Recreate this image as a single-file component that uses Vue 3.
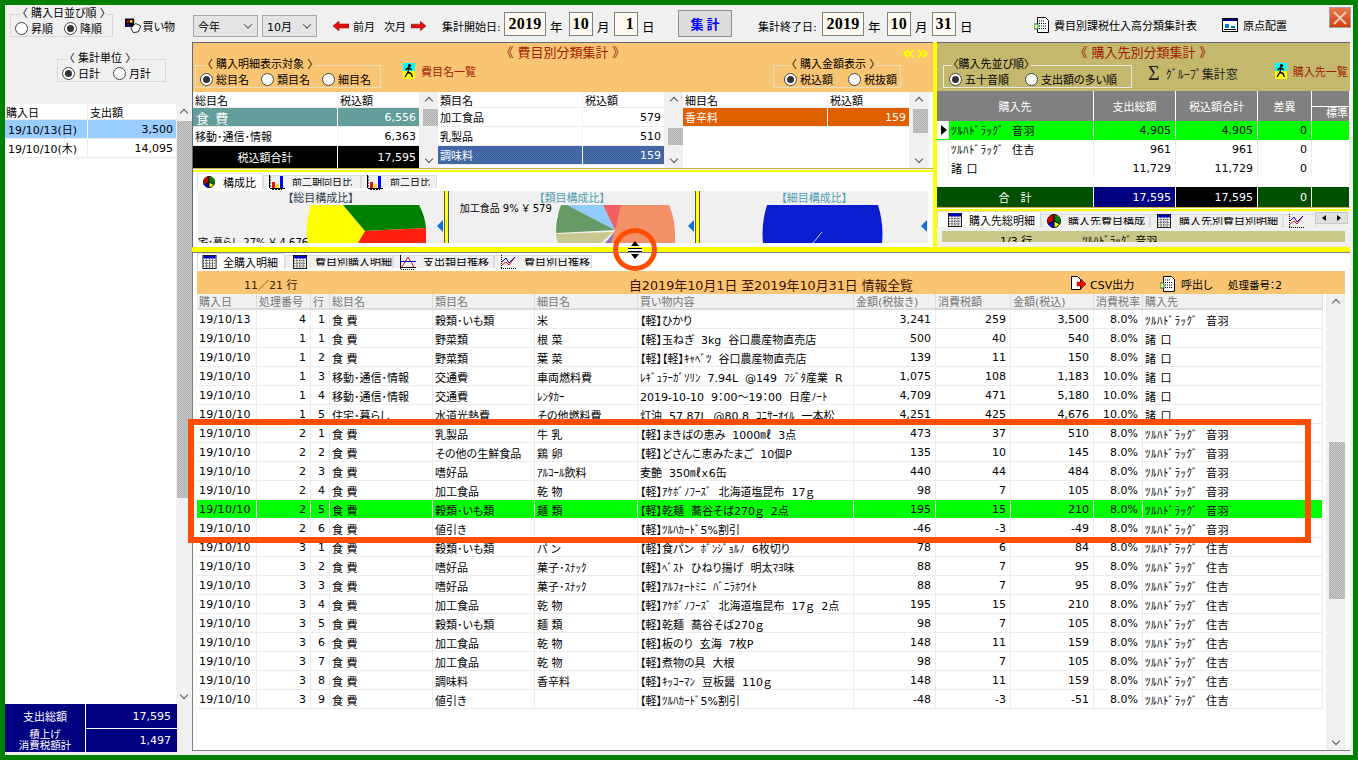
<script setup>
const S1 = 'ﾂﾙﾊﾄﾞﾗｯｸﾞ  音羽'
const S2 = 'ﾂﾙﾊﾄﾞﾗｯｸﾞ  住吉'
const S3 = '諸 口'
const F = '食 費'
const headers = ['購入日', '処理番号', '行', '総目名', '類目名', '細目名', '買い物内容', '金額(税抜き)', '消費税額', '金額(税込)', '消費税率', '購入先']
const rows = [
  ['19/10/13', 4, 1, F, '穀類･いも類', '米', '【軽】ひかり', '3,241', '259', '3,500', '8.0%', S1],
  ['19/10/10', 1, 1, F, '野菜類', '根 菜', '【軽】玉ねぎ  3kg  谷口農産物直売店', '500', '40', '540', '8.0%', S3],
  ['19/10/10', 1, 2, F, '野菜類', '葉 菜', '【軽】【軽】ｷｬﾍﾞﾂ  谷口農産物直売店', '139', '11', '150', '8.0%', S3],
  ['19/10/10', 1, 3, '移動･通信･情報', '交通費', '車両燃料費', 'ﾚｷﾞｭﾗｰｶﾞｿﾘﾝ  7.94L  @149  ﾌｼﾞﾀ産業  R', '1,075', '108', '1,183', '10.0%', S3],
  ['19/10/10', 1, 4, '移動･通信･情報', '交通費', 'ﾚﾝﾀｶｰ', '2019-10-10  9：00～19：00  日産ﾉｰﾄ', '4,709', '471', '5,180', '10.0%', S3],
  ['19/10/10', 1, 5, '住宅･暮らし', '水道光熱費', 'その他燃料費', '灯油  57.87L  @80.8  ｺﾆｻｰｵｲﾙ  一本松', '4,251', '425', '4,676', '10.0%', S3],
  ['19/10/10', 2, 1, F, '乳製品', '牛 乳', '【軽】まきばの恵み  1000㎖  3点', '473', '37', '510', '8.0%', S1],
  ['19/10/10', 2, 2, F, 'その他の生鮮食品', '鶏 卵', '【軽】どさんこ恵みたまご  10個P', '135', '10', '145', '8.0%', S1],
  ['19/10/10', 2, 3, F, '嗜好品', 'ｱﾙｺｰﾙ飲料', '麦艶  350㎖ｘ6缶', '440', '44', '484', '8.0%', S1],
  ['19/10/10', 2, 4, F, '加工食品', '乾 物', '【軽】ｱｹﾎﾞﾉﾌｰｽﾞ  北海道塩昆布  17ｇ', '98', '7', '105', '8.0%', S1],
  ['19/10/10', 2, 5, F, '穀類･いも類', '麺 類', '【軽】乾麺  蕎谷そば270ｇ  2点', '195', '15', '210', '8.0%', S1],
  ['19/10/10', 2, 6, F, '値引き', '', '【軽】ﾂﾙﾊｶｰﾄﾞ5%割引', '-46', '-3', '-49', '8.0%', S1],
  ['19/10/10', 3, 1, F, '穀類･いも類', 'パ ン', '【軽】食パン  ﾎﾞﾝｼﾞｮﾙﾉ  6枚切り', '78', '6', '84', '8.0%', S2],
  ['19/10/10', 3, 2, F, '嗜好品', '菓子･ｽﾅｯｸ', '【軽】ﾍﾞｽﾄ  ひねり揚げ  明太ﾏﾖ味', '88', '7', '95', '8.0%', S2],
  ['19/10/10', 3, 3, F, '嗜好品', '菓子･ｽﾅｯｸ', '【軽】ｱﾙﾌｫｰﾄﾐﾆ  ﾊﾞﾆﾗﾎﾜｲﾄ', '88', '7', '95', '8.0%', S2],
  ['19/10/10', 3, 4, F, '加工食品', '乾 物', '【軽】ｱｹﾎﾞﾉﾌｰｽﾞ  北海道塩昆布  17ｇ  2点', '195', '15', '210', '8.0%', S2],
  ['19/10/10', 3, 5, F, '穀類･いも類', '麺 類', '【軽】乾麺  蕎谷そば270ｇ', '98', '7', '105', '8.0%', S2],
  ['19/10/10', 3, 6, F, '加工食品', '乾 物', '【軽】板のり  玄海  7枚P', '148', '11', '159', '8.0%', S2],
  ['19/10/10', 3, 7, F, '加工食品', '乾 物', '【軽】煮物の具  大根', '98', '7', '105', '8.0%', S2],
  ['19/10/10', 3, 8, F, '調味料', '香辛料', '【軽】ｷｯｺｰﾏﾝ  豆板醤  110ｇ', '148', '11', '159', '8.0%', S2],
  ['19/10/10', 3, 9, F, '値引き', '', '【軽】ﾂﾙﾊｶｰﾄﾞ5%割引', '-48', '-3', '-51', '8.0%', S2],
]
const numCols = [1, 2, 7, 8, 9, 10]
const suppliers = [
  { name: S1, a: '4,905', b: '4,905', c: '0', cur: true },
  { name: S2, a: '961', b: '961', c: '0' },
  { name: S3, a: '11,729', b: '11,729', c: '0' },
]
const cat2 = [['加工食品', '579', ''], ['乳製品', '510', ''], ['調味料', '159', 'sel-blue']]
</script>

<template>
  <div class="app">
    <svg class="defs" width="0" height="0">
      <defs>
        <symbol id="grid" viewBox="0 0 16 16">
          <rect x="0.5" y="0.5" width="15" height="15" fill="#fff" stroke="#000" />
          <rect x="1" y="1" width="14" height="3" fill="#0000c0" />
          <path d="M1 6.5h14M1 9.5h14M1 12.5h14M4.5 4v11M8 4v11M11.5 4v11" stroke="#000" stroke-dasharray="1 1" />
        </symbol>
        <symbol id="pie" viewBox="0 0 14 14">
          <circle cx="7" cy="7" r="6.5" fill="#ffff00" stroke="#000" />
          <path d="M7 7V.5A6.5 6.5 0 0 0 1.3 10z" fill="#c00000" />
          <path d="M7 7V.5A6.5 6.5 0 0 1 12.7 10z" fill="#008000" />
          <path d="M7 7L1.3 10A6.5 6.5 0 0 0 7 13.5z" fill="#0000e0" />
          <path d="M7 .5V7M7 7l5.7 3M7 7l-5.7 3M7 7v6.5" stroke="#000" />
        </symbol>
        <symbol id="bars" viewBox="0 0 16 16">
          <path d="M.5 1v13M0 3h2M0 6h2M0 9h2M0 12h2" stroke="#000" />
          <rect x="3" y="8" width="3" height="6" fill="#e01010" />
          <rect x="7" y="10" width="3" height="4" fill="#ffe000" />
          <rect x="11" y="2" width="3" height="12" fill="#0000ff" />
          <path d="M1 14.5h15" stroke="#000" />
          <path d="M3 15.5h10" stroke="#000" stroke-dasharray="2 1" />
        </symbol>
        <symbol id="line" viewBox="0 0 16 16">
          <path d="M.5 1v14M0 13.5h16" stroke="#000" />
          <path d="M2 13L8 3l6 10" fill="none" stroke="#e01010" />
          <path d="M0 7.5h16" stroke="#0000c0" />
          <path d="M1 15.5h14" stroke="#000" stroke-dasharray="1 1" />
        </symbol>
        <symbol id="wave" viewBox="0 0 16 16">
          <path d="M.5 1v14M0 14.5h16" stroke="#000" stroke-dasharray="1 1" />
          <path d="M1 11l4-3 3 3 6-8" fill="none" stroke="#e01010" />
          <path d="M1 8l4-4 3 5 6-6" fill="none" stroke="#0000e0" />
        </symbol>
        <symbol id="walker" viewBox="0 0 12 16">
          <rect width="12" height="8" fill="#00ffff" />
          <rect y="8" width="12" height="8" fill="#ffff00" />
          <circle cx="6.5" cy="2.5" r="1.6" fill="#000" />
          <path d="M6 4.5L5 9 2 14M5 9l3 1.5 1.5 3.5M2.500 7l3-2.500 3.500 2.500" fill="none" stroke="#000" stroke-width="1.400" />
        </symbol>
        <symbol id="doc" viewBox="0 0 16 16">
          <path d="M3.500.5h8l3 3v12h-11z" fill="#fff" stroke="#000" />
          <path d="M5 4h6M5 6.500h7M5 9h7M5 11.500h7" stroke="#000" stroke-dasharray="1 1" />
          <rect x="0" y="7" width="4" height="5" fill="#ffff60" stroke="#008080" />
        </symbol>
      </defs>
    </svg>

    <header class="toolbar">
      <fieldset class="grp grp-order">
        <legend>〈 購入日並び順 〉</legend>
        <span class="radio"><i class="dot"></i>昇順</span>
        <span class="radio"><i class="dot on"></i>降順</span>
      </fieldset>
      <span class="tool t-shop">
        <svg width="20" height="18" viewBox="0 0 20 18">
          <rect x="0" y="0" width="11" height="10" fill="#000" />
          <rect x="2" y="2" width="3" height="3" fill="#e01010" />
          <rect x="6" y="2" width="3" height="3" fill="#ffe000" />
          <rect x="2" y="6" width="3" height="3" fill="#0000e0" />
          <path d="M7 11l6-5 6 3-3 7-6 1z" fill="#fff" stroke="#000" />
        </svg>買い物
      </span>
      <span class="select s-year">今年<i class="chev"></i></span>
      <span class="select s-month">10月<i class="chev"></i></span>
      <span class="tool t-prev">
        <svg width="16" height="10" viewBox="0 0 16 10"><path d="M0 5l6-5v3h10v4H6v3z" fill="#e01010" stroke="#800" stroke-width=".5" /></svg>前月
      </span>
      <span class="tool t-next">次月
        <svg width="16" height="10" viewBox="0 0 16 10"><path d="M16 5l-6-5v3H0v4h10v3z" fill="#e01010" stroke="#800" stroke-width=".5" /></svg>
      </span>
      <span class="lbl l-start">集計開始日:</span>
      <span class="date w-y">2019</span><span class="unit">年</span>
      <span class="date w-d">10</span><span class="unit">月</span>
      <span class="date w-d">1</span><span class="unit">日</span>
      <button class="run">集 計</button>
      <span class="lbl l-end">集計終了日:</span>
      <span class="date w-y">2019</span><span class="unit">年</span>
      <span class="date w-d">10</span><span class="unit">月</span>
      <span class="date w-d">31</span><span class="unit">日</span>
      <span class="tool t-report"><svg width="16" height="16"><use href="#doc" /></svg>費目別課税仕入高分類集計表</span>
      <span class="tool t-origin"><svg width="16" height="14" viewBox="0 0 16 14"><rect x=".5" y=".5" width="15" height="13" fill="#fff" stroke="#000" /><rect x="1" y="1" width="14" height="2" fill="#000080" /><path d="M3 6h4v4H3zM9 8h4v2H9z" fill="#0080c0" /><path d="M2 11.500h12" stroke="#000" /></svg>原点配置</span>
      <span class="close"><svg width="14" height="14" viewBox="0 0 14 14"><path d="M1 1l12 12M13 1L1 13" stroke="#f0c8b8" stroke-width="2" /></svg></span>
    </header>

    <div class="body">
      <aside class="left">
        <div class="left-top">
          <fieldset class="grp grp-unit">
            <legend>〈 集計単位 〉</legend>
            <span class="radio"><i class="dot on"></i>日計</span>
            <span class="radio"><i class="dot"></i>月計</span>
          </fieldset>
        </div>
        <div class="left-grid">
          <div class="left-table">
            <div class="lrow lhead"><span>購入日</span><span>支出額</span></div>
            <div class="lrow lsel"><span>19/10/13(日)</span><span class="num">3,500</span></div>
            <div class="lrow"><span>19/10/10(木)</span><span class="num">14,095</span></div>
          </div>
          <div class="sb sb-left"><i class="up"></i><b class="thumb"></b><i class="down"></i></div>
        </div>
        <div class="left-sum">
          <div class="sum-row"><span class="sum-l">支出総額</span><span class="num">17,595</span></div>
          <div class="sum-row"><span class="sum-l small">積上げ<br />消費税額計</span><span class="num">1,497</span></div>
        </div>
      </aside>

      <main class="right">
        <div class="top-panels">
          <section class="cat-panel">
            <div class="panel-head">
              <div class="ptitle">《 費目別分類集計 》</div>
              <div class="arrows">«»</div>
              <div class="head-row">
                <fieldset class="grp grp-target">
                  <legend>〈 購入明細表示対象 〉</legend>
                  <span class="radio"><i class="dot on"></i>総目名</span>
                  <span class="radio"><i class="dot"></i>類目名</span>
                  <span class="radio"><i class="dot"></i>細目名</span>
                </fieldset>
                <span class="link l-cat"><svg width="12" height="16"><use href="#walker" /></svg>費目名一覧</span>
                <fieldset class="grp grp-amount">
                  <legend>〈 購入金額表示 〉</legend>
                  <span class="radio"><i class="dot on"></i>税込額</span>
                  <span class="radio"><i class="dot"></i>税抜額</span>
                </fieldset>
              </div>
            </div>
            <div class="cat-tables">
              <div class="ct ct1">
                <div class="crow chead"><span>総目名</span><span>税込額</span></div>
                <div class="crow sel-teal"><span class="sp">食 費</span><span class="num">6,556</span></div>
                <div class="crow"><span>移動･通信･情報</span><span class="num">6,363</span></div>
                <div class="crow ctotal"><span class="center">税込額合計</span><span class="num">17,595</span></div>
              </div>
              <div class="sb sb-a"><i class="up"></i><b class="thumb"></b><i class="down"></i></div>
              <div class="ct ct2">
                <div class="crow chead"><span>類目名</span><span>税込額</span></div>
                <div v-for="c in cat2" :key="c[0]" class="crow" :class="c[2]"><span>{{ c[0] }}</span><span class="num">{{ c[1] }}</span></div>
              </div>
              <div class="sb sb-b"><i class="up"></i><b class="thumb"></b><i class="down"></i></div>
              <div class="ct ct3">
                <div class="crow chead"><span>細目名</span><span>税込額</span></div>
                <div class="crow sel-orange"><span>香辛料</span><span class="num">159</span></div>
              </div>
              <div class="sb sb-c"><i class="up"></i><b class="thumb"></b><i class="down"></i></div>
            </div>
            <div class="dbl"></div>
            <div class="tabs tabs-chart">
              <span class="tab active"><svg width="14" height="14"><use href="#pie" /></svg>構成比</span>
              <span class="tab w98"><svg width="16" height="16"><use href="#bars" /></svg><em class="tx">前二期同日比</em></span>
              <span class="tab w76"><svg width="16" height="16"><use href="#bars" /></svg><em class="tx">前二日比</em></span>
            </div>
            <div class="charts">
              <div class="chart c1">
                <span class="ctitle dark">【総目構成比】</span>
                <svg class="pie" width="246" height="52" viewBox="197 191 246 52">
                  <path d="M342 205L364 231L357 243H306Q304 224 310 205Z" fill="#ffff00" />
                  <path d="M342 205H418Q424 216 425 228L364 231Z" fill="#008000" />
                  <path d="M364 231L425 228V243H357Z" fill="#ff2010" />
                </svg>
                <span class="clabel l1">住宅･暮らし 27% ￥ 4,676</span>
                <i class="tri"></i>
              </div>
              <div class="vdiv"></div>
              <div class="chart c2">
                <span class="ctitle teal">【類目構成比】</span>
                <svg class="pie" width="247" height="52" viewBox="448 191 247 52">
                  <path d="M600 205L614 230L606 243H674Q675 220 668 205H620Z" fill="#f49068" />
                  <path d="M602 205H620L614 230Z" fill="#f06060" />
                  <path d="M566 205H602L614 230Z" fill="#90ccff" />
                  <path d="M560 205H566L614 230L555 233Q555 218 560 205Z" fill="#669966" />
                  <path d="M555 234L612 232L600 243H557Q555 238 555 234Z" fill="#c8c890" />
                  <path d="M613 233L604 243H610Z" fill="#8870c0" />
                  <path d="M547 215L557 217" stroke="#fff" />
                </svg>
                <span class="clabel l2">加工食品 9% ￥ 579</span>
                <i class="tri"></i>
              </div>
              <div class="vdiv"></div>
              <div class="chart c3">
                <span class="ctitle teal">【細目構成比】</span>
                <svg class="pie" width="228" height="52" viewBox="700 191 228 52">
                  <path d="M767 205H878Q884 224 882 243H763Q761 224 767 205Z" fill="#0a1ed0" />
                  <path d="M813 243L822 232" stroke="#c0c8f0" />
                </svg>
                <i class="tri"></i>
              </div>
            </div>
          </section>

          <section class="sup-panel">
            <div class="sup-head">
              <div class="ptitle">《 購入先別分類集計 》</div>
              <div class="sup-tools">
                <fieldset class="grp grp-sup">
                  <legend>〈購入先並び順〉</legend>
                  <span class="radio"><i class="dot on"></i>五十音順</span>
                  <span class="radio"><i class="dot"></i>支出額の多い順</span>
                </fieldset>
                <span class="sigma"><b>Σ</b>ｸﾞﾙｰﾌﾟ集計窓</span>
                <span class="link l-sup"><svg width="12" height="16"><use href="#walker" /></svg>購入先一覧</span>
              </div>
            </div>
            <div class="sup-table">
              <div class="srow shead">
                <span class="s-name c">購入先</span><span class="c">支出総額</span><span class="c">税込額合計</span><span class="c">差異</span>
                <span class="s-extra"><em>標準</em></span>
              </div>
              <div v-for="s in suppliers" :key="s.name" class="srow" :class="{ cur: s.cur }">
                <span class="s-name"><i class="ind"><b v-if="s.cur"></b></i><span class="s-text">{{ s.name }}</span></span>
                <span class="num">{{ s.a }}</span><span class="num">{{ s.b }}</span><span class="num">{{ s.c }}</span><span></span>
              </div>
              <div class="sgap"></div>
              <div class="srow stotal">
                <span class="c s-name wide">合　計</span><span class="num navy">17,595</span><span class="num black">17,595</span><span class="num">0</span><span></span>
              </div>
            </div>
            <div class="dbl"></div>
            <div class="tabs tabs-sup">
              <span class="tab active"><svg width="16" height="14"><use href="#grid" /></svg>購入先総明細</span>
              <span class="tab w109"><svg width="14" height="14"><use href="#pie" /></svg><em class="tx">購入先費目構成</em></span>
              <span class="tab w133"><svg width="16" height="14"><use href="#grid" /></svg><em class="tx">購入先別費目別明細</em></span>
              <span class="tab w32"><svg width="16" height="16"><use href="#wave" /></svg></span>
              <span class="spin"><i class="tl"></i><i class="tr"></i></span>
            </div>
            <div class="sup-band"><span>1/3 行</span><span>ﾂﾙﾊﾄﾞﾗｯｸﾞ 音羽</span></div>
          </section>
        </div>

        <div class="splitter"></div>

        <section class="detail">
          <div class="tabs tabs-detail">
            <span class="tab active"><svg width="16" height="14"><use href="#grid" /></svg>全購入明細</span>
            <span class="tab w108"><svg width="16" height="14"><use href="#grid" /></svg><em class="tx">費目別購入明細</em></span>
            <span class="tab w101"><svg width="16" height="16"><use href="#line" /></svg><em class="tx">支出類目推移</em></span>
            <span class="tab w98"><svg width="16" height="16"><use href="#wave" /></svg><em class="tx">費目別日推移</em></span>
          </div>
          <div class="band">
            <span class="b-count">11／21 行</span>
            <span class="b-title">自2019年10月1日 至2019年10月31日 情報全覧</span>
            <span class="b-csv">
              <svg width="16" height="16" viewBox="0 0 16 16"><path d="M1.500.5h6l3 3v10h-9z" fill="#fff" stroke="#000" /><path d="M7 6h4V3l5 5-5 5v-3H7z" fill="#e01010" stroke="#800" stroke-width=".5" /></svg>CSV出力
            </span>
            <span class="b-call"><svg width="16" height="16"><use href="#doc" /></svg>呼出し</span>
            <span class="b-no">処理番号：2</span>
          </div>
          <div class="grid-wrap">
            <div class="dgrid">
              <div class="drow dhead">
                <span v-for="h in headers" :key="h">{{ h }}</span>
              </div>
              <div v-for="(r, i) in rows" :key="i" class="drow" :class="{ hit: i === 10 }">
                <span v-for="(v, j) in r" :key="j" :class="{ num: numCols.includes(j) }">{{ v }}</span>
              </div>
            </div>
            <div class="sb sb-d"><i class="up"></i><b class="gap1"></b><b class="thumb"></b><i class="down"></i></div>
          </div>
        </section>
      </main>
    </div>

    <div class="mark-rect"></div>
    <div class="mark-ring"><svg width="16" height="18" viewBox="0 0 16 18"><path d="M1 7h14v4H1z" fill="#fff" /><path d="M8 0l4 5H4zM8 18l-4-5h8z" fill="#000" /><path d="M1 7.500h14M1 10.500h14" stroke="#000" /></svg></div>
  </div>
</template>

<style scoped>
* { box-sizing: border-box; }
.defs { position: absolute; }
.app {
  width: 1358px; height: 760px; position: relative; overflow: hidden;
  border: 5px solid #008000; background: #f0f0f0;
  display: flex; flex-direction: column;
  font: 11px "DejaVu Sans", "Noto Sans CJK JP", sans-serif; color: #000;
  font-feature-settings: "palt";
}
.num { text-align: right; }
.c { text-align: center; }

/* toolbar */
.toolbar { height: 37px; display: flex; align-items: center; flex: none; position: relative; }
.grp { margin: 0; padding: 0 3px; min-width: 0; border: 1px solid #d8d8d8; display: flex; align-items: center; position: relative; }
.grp legend { padding: 0 1px; font-size: 11px; line-height: 12px; margin-left: 6px; color: #000; white-space: nowrap; }
.radio { display: inline-flex; align-items: center; gap: 3px; white-space: nowrap; }
.dot { width: 13px; height: 13px; border-radius: 50%; background: #fff; border: 1px solid #444; display: inline-block; position: relative; flex: none; }
.dot.on::after { content: ""; position: absolute; inset: 2px; border-radius: 50%; background: #333; }
.grp-order { width: 103px; height: 29px; margin: 3px 0 0 5px; gap: 11px; padding-left: 4px; align-self: flex-start; flex: none; }
.tool { display: inline-flex; align-items: center; gap: 3px; white-space: nowrap; flex: none; margin-top: 5px; }
.t-shop { margin-left: 12px; width: 50px; gap: 1px; overflow: hidden; }
.select { height: 22px; border: 1px solid #a8a8a8; background: #e4e4e4; display: flex; align-items: center; justify-content: space-between; padding: 0 6px 0 4px; flex: none; margin-top: 5px; }
.chev { width: 6px; height: 6px; border: solid #555; border-width: 0 1.300px 1.300px 0; transform: rotate(45deg) translate(-1px, -1px); }
.s-year { width: 65px; margin-left: 18px; }
.s-month { width: 55px; margin-left: 4px; }
.t-prev { margin-left: 16px; width: 42px; gap: 4px; }
.t-next { margin-left: 9px; width: 42px; gap: 5px; }
.lbl { white-space: nowrap; flex: none; margin-top: 5px; }
.l-start { margin-left: 16px; width: 62px; }
.date { height: 24px; border: 1px solid #808080; background: #fffaf0; font: bold 16px "Liberation Serif", serif; letter-spacing: .3px; display: flex; align-items: center; justify-content: flex-end; padding: 0 3px; margin-right: 4px; flex: none; }
.w-y { width: 42px; justify-content: center; }
.w-d { width: 24px; }
.unit { width: 17px; font-size: 12.500px; flex: none; margin-top: 5px; }
.w-y + .unit { width: 19px; }
.run { width: 54px; height: 27px; margin-left: 19px; border: 1px solid #909090; background: #dcdcdc; color: #0000ff; font: bold 13px "Noto Sans CJK JP", sans-serif; padding: 0; flex: none; }
.l-end { margin-left: 26px; width: 64px; }
.t-report { margin-left: 57px; gap: 4px; margin-top: 3px; }
.t-origin { margin-left: 25px; gap: 5px; margin-top: 3px; }
.close { position: absolute; left: 1324px; top: 2px; width: 22px; height: 21px; background: linear-gradient(#e87850, #d04010); border: 1px solid #a0a0a0; display: flex; align-items: center; justify-content: center; }

/* body */
.body { flex: 1; display: flex; min-height: 0; }
.left { width: 187px; flex: none; display: flex; flex-direction: column; }
.left-top { height: 62px; padding: 11px 0 0 52px; }
.grp-unit { width: 109px; height: 29px; gap: 13px; padding-left: 4px; }
.left-grid { flex: 1; display: flex; min-height: 0; }
.left-table { width: 171px; background: #fff; }
.lrow { display: grid; grid-template-columns: 82px 89px; height: 19px; border-bottom: 1px solid #ececec; align-items: center; }
.lrow span { padding: 0 3px; white-space: nowrap; }
.lrow span + span { border-left: 1px solid #ececec; height: 100%; display: flex; align-items: center; }
.lrow span.num { justify-content: flex-end; padding-right: 3px; }
.lhead { height: 16px; font-size: 11px; }
.lhead span { padding: 0 1px 1px; }
.lhead span + span { padding-left: 2px; }
.lsel { background: #99ccff; }
.lsel span { border-color: #fff !important; }
.sb { display: flex; flex-direction: column; align-items: flex-end; background: #f0f0f0; position: relative; }
.sb .up, .sb .down { width: 6px; height: 6px; flex: none; border: solid #555; border-width: 1.500px 0 0 1.500px; align-self: center; }
.sb .up { transform: rotate(45deg); margin: 6px 0 5px; }
.sb .down { transform: rotate(225deg); margin: auto 0 6px; }
.thumb { display: block; width: 15px; background: repeating-conic-gradient(#c8c8c8 0 25%, #b0b0b0 0 50%) 0 0 / 2px 2px; }
.sb-left { width: 16px; }
.sb-left .thumb { height: 377px; }
.left-sum { height: 48px; flex: none; width: 172px; background: #000080; color: #fff; margin-bottom: 3px; }
.sum-row { height: 24px; display: grid; grid-template-columns: 80px 92px; align-items: center; }
.sum-row span { display: flex; height: 100%; align-items: center; }
.sum-row .num { justify-content: flex-end; padding-right: 6px; border-left: 1px solid #fff; }
.sum-row + .sum-row .num { border-top: 1px solid #fff; }
.sum-l { justify-content: center; text-align: center; }
.sum-l.small { font-size: 10.500px; line-height: 11px; }

.right { flex: 1; display: flex; flex-direction: column; min-width: 0; margin-right: 3px; }
.top-panels { height: 205px; flex: none; display: flex; }
.cat-panel { width: 741px; border: solid #606880; border-width: 1px 0 0 1px; display: flex; flex-direction: column; background: #fff; }
.panel-head { height: 49px; background: #f9c573; position: relative; flex: none; }
.ptitle { color: #a02000; text-align: center; font-size: 13px; line-height: 17px; padding-top: 1px; }
.arrows { position: absolute; right: 4px; top: 1px; color: #ffff00; font: bold 21px "DejaVu Sans", sans-serif; line-height: 18px; }
.head-row { display: flex; align-items: flex-start; position: relative; height: 32px; }
.grp-target { width: 186px; height: 29px; margin: -2px 0 0 2px; gap: 12px; padding: 0 0 0 4px; }
.link { color: #a02000; display: inline-flex; align-items: center; gap: 6px; white-space: nowrap; }
.l-cat { margin: 2px 0 0 22px; font-size: 11px; }
.grp-amount { width: 128px; height: 29px; margin: -2px 32px 0 auto; gap: 15px; padding: 0 0 0 10px; }
.panel-head .grp { border-color: #e8dcc0; }

.cat-tables { height: 76px; background: #fff; display: flex; flex: none; }
.ct { background: #fff; height: 76px; }
.crow { display: grid; height: 19px; align-items: stretch; border-bottom: 1px solid #ececec; }
.crow span { display: flex; align-items: center; padding: 0 2px; white-space: nowrap; overflow: hidden; }
.crow span + span { border-left: 1px solid #f0f0f0; }
.crow .num { justify-content: flex-end; padding-right: 3px; }
.chead { height: 16px; }
.ct1 { width: 226px; } .ct1 .crow { grid-template-columns: 144px 82px; }
.ct2 { width: 226px; } .ct2 .crow { grid-template-columns: 144px 82px; }
.ct3 { width: 226px; } .ct3 .crow { grid-template-columns: 144px 82px; }
.sel-teal { background: repeating-conic-gradient(#6aa5a0 0 25%, #5c9696 0 50%) 0 0 / 2px 2px; color: #fff; }
.sel-teal .sp { font-size: 13px; padding-left: 3px; letter-spacing: 1px; }
.sel-blue { background: repeating-conic-gradient(#4a70b0 0 25%, #3a5f98 0 50%) 0 0 / 2px 2px; color: #fff; }
.sel-orange { background: #e06000; color: #fff; }
.sel-teal span + span, .sel-blue span + span, .sel-orange span + span, .ctotal span + span { border-left-color: #fff; }
.ctotal { background: #000; color: #fff; height: 22px; border-bottom: 0; }
.center { justify-content: center; }
.sb-a { width: 19px; } .sb-a .thumb { height: 17px; }
.sb-b { width: 19px; } .sb-b .thumb { height: 17px; margin-top: 19px; }
.sb-c { width: 20px; padding-right: 1px; } .sb-c .thumb { height: 24px; }
.sb-a, .sb-b, .sb-c { height: 76px; }
.dbl { height: 4px; flex: none; border-top: 1px solid #c8b040; border-bottom: 2px solid #ffff00; background: #fff; }
.tabs { display: flex; align-items: flex-end; flex: none; overflow: hidden; position: relative; }
.tab { height: 13px; margin-bottom: 3px; display: inline-flex; align-items: center; gap: 7px; border: 1px solid #dcdcdc; border-bottom: 0; background: #f0f0f0; font-size: 11px; padding-left: 5px; white-space: nowrap; flex: none; }
.tab.active { height: 17px; margin-bottom: 1px; background: #fff; padding: 0 6px 0 5px; }
.tx { font-style: normal; display: block; height: 8px; overflow: hidden; line-height: 9px; font-size: 11px; }
.tabs-chart { height: 19px; padding-left: 4px; background: #fff; }
.tabs-chart .tx { font-size: 10px; }
.tabs-chart .tab.active { width: 66px; gap: 8px; }
.w98 { width: 98px; } .w76 { width: 76px; }
.w109 { width: 109px; } .w133 { width: 133px; } .w32 { width: 34px; }
.w108 { width: 108px; } .w101 { width: 101px; }
.charts { height: 52px; background: #fff; display: flex; padding: 0 5px; flex: none; }
.chart { position: relative; overflow: hidden; background: #f0f0f0; height: 52px; }
.c1 { width: 246px; } .c2 { width: 247px; } .c3 { width: 228px; }
.vdiv { width: 5px; flex: none; background: linear-gradient(90deg, #555 0 1px, #ffff00 1px 4px, #555 4px); }
.pie { position: absolute; left: 0; top: 0; display: block; }
.ctitle { position: absolute; top: 1px; left: 0; width: 100%; text-align: center; z-index: 1; font-size: 11px; line-height: 14px; }
.dark { color: #304050; }
.teal { color: #50a0b0; }
.clabel { position: absolute; z-index: 1; font-size: 10px; line-height: 11px; white-space: nowrap; }
.l1 { left: -10px; top: 46px; }
.l2 { left: 11px; top: 12px; }
.tri { position: absolute; right: 1px; top: 29px; z-index: 1; width: 0; height: 0; border: 6px solid transparent; border-left-width: 0; border-right: 6px solid #1070d8; }

/* supplier panel */
.sup-panel { width: 417px; border-left: 4px solid #ffff00; background: #f0f0f0; display: flex; flex-direction: column; position: relative; }
.sup-head { height: 49px; background: repeating-conic-gradient(#c8bc72 0 25%, #c0b468 0 50%) 0 0 / 2px 2px; border-top: 1px solid #606880; flex: none; }
.sup-tools { display: flex; align-items: flex-start; }
.grp-sup { width: 189px; height: 29px; margin: -2px 0 0 6px; border-color: #e8e8e8; gap: 16px; padding: 0 0 0 5px; }
.grp-sup legend { margin-left: 3px; }
.sigma { display: inline-flex; align-items: center; gap: 6px; color: #222; margin: 1px 0 0 16px; white-space: nowrap; font-size: 12px; }
.sigma b { font: 20px "Liberation Serif", serif; }
.l-sup { margin: 2px 0 0 37px; gap: 6px; }
.sup-table { width: 412px; height: 116px; background: #fff; overflow: hidden; flex: none; }
.srow { display: grid; grid-template-columns: 156px 82px 82px 54px 38px; height: 19px; }
.srow > span { display: flex; align-items: center; height: 18px; border-left: 1px solid #ececec; padding: 0 4px; overflow: hidden; white-space: nowrap; }
.srow > .num { justify-content: flex-end; }
.srow > .c { justify-content: center; }
.s-name { padding: 0 !important; border-left: 0 !important; }
.ind { width: 12px; height: 100%; flex: none; border-right: 1px solid #ececec; background: #fff; display: flex; align-items: center; padding-left: 4px; }
.ind b { width: 0; height: 0; border: 5px solid transparent; border-left: 6px solid #000; border-right: 0; }
.s-text { padding-left: 2px; white-space: pre; letter-spacing: .5px; }
.shead { height: 30px; background: #808080; color: #fff; }
.shead > span { height: 30px; border-left: 1px solid #fff; }
.shead .s-name { border-left: 0; }
.s-extra { position: relative; padding: 0 !important; }
.s-extra em { position: absolute; left: 0; right: 0; top: 15px; height: 15px; color: #fff; font-style: normal; text-align: right; padding: 0 1px; border-top: 1px solid #fff; line-height: 14px; }
.cur { background: #00ff00; }
.sgap { height: 9px; }
.stotal { background: #005000; color: #fff; height: 20px; border: 0; }
.stotal > span { height: 20px; border-left-color: #fff; }
.navy { background: #000080; }
.black { background: #000; }
.tabs-sup { height: 18px; padding-left: 0; background: #f0f0f0; }
.tabs-sup .tab { margin-bottom: 2px; }
.tabs-sup .tab.active { width: 104px; height: 16px; padding: 0 0 0 9px; gap: 6px; }
.spin { position: absolute; left: 378px; top: 1px; width: 33px; height: 12px; background: #e0e0e0; display: flex; border: 1px solid #c8c8c8; }
.spin i { width: 50%; display: flex; align-items: center; justify-content: center; }
.spin .tl::before { content: ""; border: 3px solid transparent; border-right: 4px solid #000; border-left: 0; }
.spin .tr::before { content: ""; border: 3px solid transparent; border-left: 4px solid #000; border-right: 0; }
.sup-band { margin: 2px 5px 0; height: 11px; background: #c8c888; display: flex; overflow: hidden; line-height: 21px; gap: 50px; padding-left: 58px; flex: none; }

.splitter { height: 5px; flex: none; background: #ffff00; }
.detail { flex: 1; min-height: 0; background: #fff; border: 1px solid #808080; border-right: 0; display: flex; flex-direction: column; padding: 0 5px 0 4px; margin-bottom: 4px; }
.tabs-detail { height: 18px; }
.tabs-detail .tab { gap: 7px; padding-left: 6px; }
.tabs-detail .tab.active { gap: 6px; padding-left: 4px; width: 88px; }
.band { height: 23px; padding-top: 3px; background: #f9c573; display: flex; align-items: center; flex: none; position: relative; }
.b-count { margin-left: 47px; color: #402000; font-size: 11px; }
.b-title { position: absolute; left: 432px; color: #401000; font-size: 12.800px; white-space: nowrap; }
.b-csv { position: absolute; left: 873px; display: flex; align-items: center; gap: 4px; font-size: 11px; }
.b-call { position: absolute; left: 963px; display: flex; align-items: center; gap: 5px; }
.b-no { position: absolute; left: 1031px; font-size: 10.500px; }
.grid-wrap { flex: 1; display: flex; min-height: 0; background: #fff; }
.dgrid { width: 1126px; flex: none; }
.drow { display: grid; grid-template-columns: 60px 54px 19px 103px 102px 103px 216px 82px 75px 83px 49px 180px; height: 19px; border-bottom: 1px solid #ececec; }
.drow span { display: flex; align-items: center; padding: 1px 2px 0; overflow: hidden; white-space: pre; border-right: 1px solid #ececec; }
.drow span.num { justify-content: flex-end; padding-right: 4px; }
.drow span:first-child { letter-spacing: .3px; }
.drow span:last-child { letter-spacing: .5px; }
.dhead { height: 16px; background: #f0f0f0; border-bottom: 2px solid #d8dcdc; }
.dhead span { color: #777; border-right-color: #d8dcdc; padding-top: 0; }
.dhead span:first-child, .dhead span:last-child { letter-spacing: 0; }
.hit { background: #00ff00; border-bottom-color: #fff; }
.hit span { border-right-color: #fff; }
.sb-d { width: 19px; margin-left: 3px; background: #f0f0f0; }
.sb-d .gap1 { height: 131px; }
.sb-d .thumb { height: 157px; width: 16px; }

.mark-rect { position: absolute; left: 183px; top: 414px; width: 1123px; height: 124px; border: 6px solid #ff4e00; pointer-events: none; }
.mark-ring { position: absolute; left: 608px; top: 223px; width: 44px; height: 43px; border: 5px solid #ff4e00; border-radius: 50%; display: flex; align-items: center; justify-content: center; }
</style>

<style>
html, body { margin: 0; padding: 0; background: #f0f0f0; }
</style>
